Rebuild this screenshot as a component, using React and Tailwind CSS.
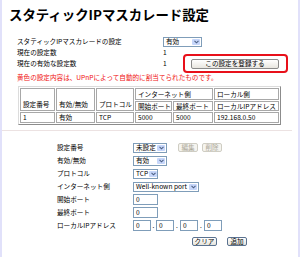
import React from "react";

function Chev() {
  return (
    <svg width="5" height="4" viewBox="0 0 5 4">
      <polyline points="0.5,0.8 2.5,2.8 4.5,0.8" fill="none" stroke="#4d6185" strokeWidth="1.1" />
    </svg>
  );
}

function Sel({ w, children }) {
  return (
    <div className={`flex items-stretch border border-[#7f9db9] bg-white h-[10px] shrink-0 ${w}`}>
      <span className="flex-1 pl-[2px] flex items-center whitespace-nowrap">{children}</span>
      <span className="w-[8px] m-[1px] bg-[#c6d6fa] rounded-[1px] flex items-center justify-center shrink-0">
        <Chev />
      </span>
    </div>
  );
}

function Inp({ w, children }) {
  return (
    <div className={`border border-[#7f9db9] bg-white h-[11px] pl-[2px] flex items-center shrink-0 ${w}`}>{children}</div>
  );
}

function Btn({ w, children, disabled }) {
  return (
    <div
      className={`h-[9px] rounded-[2px] border flex items-center justify-center whitespace-nowrap shrink-0 ${w} ${
        disabled
          ? "border-[#cfcdc3] text-[#aca899] bg-[#f5f4ef]"
          : "border-[#5a7290] bg-gradient-to-b from-white to-[#e6e4dc] text-black"
      }`}
    >
      {children}
    </div>
  );
}

function Row({ label, children }) {
  return (
    <div className="h-[13px] flex items-center">
      <span className="w-[76px] shrink-0 whitespace-nowrap">{label}</span>
      {children}
    </div>
  );
}

export default function App() {
  const th = "border border-[#a8a8a8] px-[2px] whitespace-nowrap";
  return (
    <div className="w-[300px] h-[257px] overflow-hidden bg-white border-l-2 border-r-2 border-[#e1e1fa] font-['Noto_Sans_CJK_JP',sans-serif] text-[6.6px] leading-none text-black">
      <h1 className="pt-[6px] pl-[7px] text-[13.4px] leading-[16px] font-bold whitespace-nowrap">
        スタティックIPマスカレード設定
      </h1>

      <div className="mt-[14px] pl-[15px] flex flex-col">
        <div className="h-[11px] flex items-center">
          <span className="w-[146px] shrink-0">スタティックIPマスカレードの設定</span>
          <Sel w="w-[39px]">有効</Sel>
        </div>
        <div className="h-[11px] flex items-center">
          <span className="w-[146px] shrink-0">現在の設定数</span>
          <span>1</span>
        </div>
        <div className="h-[11px] flex items-center">
          <span className="w-[146px] shrink-0">現在の有効な設定数</span>
          <span className="w-[28px] shrink-0">1</span>
          <div className="relative">
            <div className="absolute left-[-8px] top-[-5px] right-[-9px] bottom-[-4px] border-2 border-[#e8101a] rounded-[4px]" />
            <div className="h-[10px] w-[88px] rounded-[2px] border border-[#8a8a8a] bg-gradient-to-b from-white to-[#e8e6e0] flex items-center justify-center">
              この設定を登録する
            </div>
          </div>
        </div>
      </div>

      <p className="mt-[4px] pl-[15px] text-[#f01010] h-[8px] leading-[8px] whitespace-nowrap">
        黄色の設定内容は、UPnPによって自動的に割当てられたものです。
      </p>

      <table className="mt-[5px] ml-[16px] w-[263px] table-fixed border-separate border-spacing-[1px] border border-t-[#dcdcdc] border-l-[#dcdcdc] border-r-[#8c8c8c] border-b-[#8c8c8c]">
        <colgroup>
          <col className="w-[35px]" />
          <col className="w-[39px]" />
          <col className="w-[38px]" />
          <col className="w-[37px]" />
          <col className="w-[40px]" />
          <col className="w-[65px]" />
        </colgroup>
        <tbody>
          <tr className="h-[12px]">
            <td rowSpan={2} className={`${th} pb-[2px] align-bottom`}>設定番号</td>
            <td rowSpan={2} className={`${th} pb-[2px] align-bottom`}>有効/無効</td>
            <td rowSpan={2} className={`${th} pb-[2px] align-bottom`}>プロトコル</td>
            <td colSpan={2} className={`${th} align-middle`}>インターネット側</td>
            <td className={`${th} align-middle`}>ローカル側</td>
          </tr>
          <tr className="h-[10px]">
            <td className={`${th} align-middle`}>開始ポート</td>
            <td className={`${th} align-middle`}>最終ポート</td>
            <td className={`${th} align-middle`}>ローカルIPアドレス</td>
          </tr>
          <tr className="h-[11px]">
            <td className={`${th} align-middle`}>1</td>
            <td className={`${th} align-middle`}>有効</td>
            <td className={`${th} align-middle`}>TCP</td>
            <td className={`${th} align-middle`}>5000</td>
            <td className={`${th} align-middle`}>5000</td>
            <td className={`${th} align-middle`}>192.168.0.50</td>
          </tr>
        </tbody>
      </table>

      <div className="mt-[5px] mr-[6px] border-t border-[#ece2e2]" />

      <div className="mt-[10px] pl-[55px] flex flex-col">
        <Row label="設定番号">
          <Sel w="w-[34px]">未設定</Sel>
          <span className="ml-[11px]">
            <Btn w="w-[20px]" disabled>編集</Btn>
          </span>
          <span className="ml-[4px]">
            <Btn w="w-[20px]" disabled>削除</Btn>
          </span>
        </Row>
        <Row label="有効/無効">
          <Sel w="w-[34px]">有効</Sel>
        </Row>
        <Row label="プロトコル">
          <Sel w="w-[25px]">TCP</Sel>
        </Row>
        <Row label="インターネット側">
          <Sel w="w-[66px]">Well-known port</Sel>
        </Row>
        <Row label="開始ポート">
          <Inp w="w-[25px]">0</Inp>
        </Row>
        <Row label="最終ポート">
          <Inp w="w-[25px]">0</Inp>
        </Row>
        <Row label="ローカルIPアドレス">
          <Inp w="w-[18px]">0</Inp>
          <span className="w-[5px] text-center">.</span>
          <Inp w="w-[18px]">0</Inp>
          <span className="w-[6px] text-center">.</span>
          <Inp w="w-[18px]">0</Inp>
          <span className="w-[6px] text-center">.</span>
          <Inp w="w-[18px]">0</Inp>
        </Row>
      </div>

      <div className="mt-[5px] pl-[190px] flex items-center gap-[10px]">
        <Btn w="w-[25px]">クリア</Btn>
        <Btn w="w-[20px]">追加</Btn>
      </div>
    </div>
  );
}
